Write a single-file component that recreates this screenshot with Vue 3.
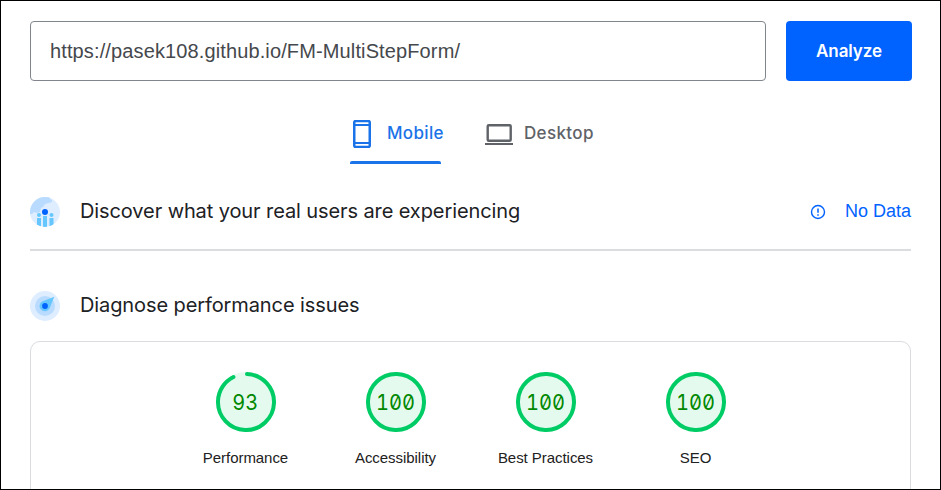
<script setup>
const scores = [
  { label: 'Performance', value: 93 },
  { label: 'Accessibility', value: 100 },
  { label: 'Best Practices', value: 100 },
  { label: 'SEO', value: 100 },
]
const circumference = 2 * Math.PI * 28
const dash = (value) =>
  value === 100 ? 'none' : `${(value / 100) * circumference - 2} ${circumference}`
</script>

<template>
  <main class="page">
    <form class="search" @submit.prevent>
      <input class="url" type="text" value="https://pasek108.github.io/FM-MultiStepForm/" aria-label="URL" />
      <button class="analyze" type="submit"><span>Analyze</span></button>
    </form>

    <nav class="tabs">
      <a class="tab active">
        <svg class="phone" width="18" height="28" viewBox="0 0 18 28">
          <rect x="1.250" y="1" width="15.500" height="26" rx="1.500" fill="none" stroke="currentColor" stroke-width="2.500" />
          <path d="M2 5h14M2 23h14" stroke="currentColor" stroke-width="2" />
        </svg>
        <span class="mobile-label">Mobile</span>
      </a>
      <a class="tab">
        <svg width="28" height="21" viewBox="0 0 28 21">
          <rect x="2.700" y="1.200" width="23" height="15.500" rx="1" fill="none" stroke="currentColor" stroke-width="2.400" />
          <path d="M0 20h28" stroke="currentColor" stroke-width="2" />
        </svg>
        <span class="desktop-label">Desktop</span>
      </a>
    </nav>

    <section class="discover">
      <svg class="badge" width="30" height="30" viewBox="0 0 30 30">
        <defs><clipPath id="disc"><circle cx="15" cy="15" r="15" /></clipPath></defs>
        <g clip-path="url(#disc)">
          <path fill="#deedff" d="M0 0h30v30H0z" />
          <path fill="#b8dbff" d="M0 0h20v2l2 1v2l-3 1-4 1-2 3-2 1-1 4-3 1-3-1-2 2H0z" />
          <g fill="#66c7ff">
            <circle cx="9" cy="18" r="2" /><circle cx="21.500" cy="18" r="2" />
            <path d="M7 21h4v9H7zM13 19h4v11h-4zM19.500 21h4v9h-4z" />
          </g>
          <circle cx="15" cy="15" r="3" fill="#0062ff" />
        </g>
      </svg>
      <h2 class="discover-title">Discover what your real users are experiencing</h2>
      <svg class="info" width="16" height="16" viewBox="0 0 16 16">
        <circle cx="8" cy="8" r="6.500" fill="none" stroke="currentColor" stroke-width="1.400" />
        <path d="M8 4.500v4.300M8 10.300v1.500" stroke="currentColor" stroke-width="1.500" />
      </svg>
      <span class="no-data">No Data</span>
    </section>

    <section class="diagnose">
      <svg class="badge" width="30" height="30" viewBox="0 0 30 30">
        <circle cx="15" cy="15" r="15" fill="#deedff" />
        <circle cx="15" cy="15" r="10" fill="#b8dbff" />
        <path fill="#66c7ff" d="M24.300 5.800 12 10.500a5.300 5.300 0 1 0 7.500 7z" />
        <circle cx="15" cy="15" r="2.900" fill="#0062ff" />
      </svg>
      <h2 class="diagnose-title">Diagnose performance issues</h2>
    </section>

    <section class="card">
      <div v-for="score in scores" :key="score.label" class="score">
        <div class="gauge">
          <svg width="60" height="60" viewBox="0 0 60 60">
            <circle cx="30" cy="30" r="30" fill="#e5faef" />
            <circle
              cx="30" cy="30" r="28" fill="none" stroke="#00cc66" stroke-width="4"
              stroke-linecap="round" :stroke-dasharray="dash(score.value)"
              transform="rotate(-88 30 30)"
            />
          </svg>
          <span class="value">{{ score.value }}</span>
        </div>
        <span class="label">{{ score.label }}</span>
      </div>
    </section>
  </main>
</template>

<style>
body { background: #fff; }
</style>

<style scoped>
.page {
  box-sizing: border-box;
  width: 941px;
  height: 490px;
  overflow: hidden;
  border: 1px solid #000;
  padding: 20px 28px 0 29px;
  background: #fff;
  font-family: "Liberation Sans", Arial, sans-serif;
}
.search { display: flex; gap: 20px; height: 60px; }
.url {
  box-sizing: border-box;
  width: 736px;
  height: 60px;
  padding: 0 19px;
  border: 1px solid #80868b;
  border-radius: 4px;
  outline: none;
  background: #fff;
  color: #45484c;
  font: 20px "Liberation Sans", Arial, sans-serif;
  letter-spacing: 0.125px;
}
.analyze {
  width: 126px;
  height: 60px;
  padding: 0;
  border: 0;
  border-radius: 4px;
  background: #0062ff;
  color: #fff;
  font: 600 17px Inter, sans-serif;
  letter-spacing: -0.1px;
}
.tabs { display: flex; gap: 44px; height: 83px; padding-left: 320px; }
.tab {
  box-sizing: border-box;
  display: flex;
  align-items: center;
  height: 83px;
  padding-top: 23px;
  color: #5f6368;
  font: 500 17px Inter, sans-serif;
  letter-spacing: 0.35px;
  white-space: nowrap;
}
.tab svg { flex: none; }
.tab span { margin-left: 11px; padding-bottom: 2px; }
.active {
  width: 91px;
  color: #1a73e8;
}
.active::after {
  content: "";
  align-self: flex-end;
  flex: none;
  width: 91px;
  height: 3px;
  margin-left: -94px;
  border-radius: 2px 2px 0 0;
  background: #1a73e8;
}
.tab .phone { margin-left: 3px; }
.tab .mobile-label { margin-left: 16px; }
.discover {
  box-sizing: border-box;
  display: flex;
  align-items: center;
  width: 881px;
  height: 87px;
  padding-top: 10px;
  border-bottom: 2px solid #dadce0;
}
.badge { flex: none; margin-right: 20px; }
h2 {
  margin: 0;
  padding-bottom: 2px;
  color: #202124;
  font: 400 20px/28px Inter, sans-serif;
  letter-spacing: -0.1px;
  white-space: nowrap;
}
.info { margin-left: auto; color: #0062ff; flex: none; }
.no-data {
  margin-left: 19px;
  padding-bottom: 2px;
  color: #0062ff;
  font-size: 18px;
  line-height: 28px;
  white-space: nowrap;
}
.diagnose { display: flex; align-items: center; height: 30px; padding: 40px 0 20px; }
.card {
  box-sizing: border-box;
  display: flex;
  justify-content: center;
  width: 881px;
  height: 170px;
  padding-top: 30px;
  border: 1px solid #dadce0;
  border-radius: 10px;
}
.score { display: flex; flex-direction: column; align-items: center; width: 150px; }
.gauge { display: grid; width: 60px; height: 60px; place-items: center; }
.gauge svg, .value { grid-area: 1 / 1; }
.value {
  color: #080;
  font: 400 22px/26px Inter, sans-serif;
  font-feature-settings: "zero", "tnum";
  transform: scaleX(0.91);
}
.label { margin-top: 16px; color: #212121; font-size: 15px; line-height: 20px; letter-spacing: -0.05px; }
</style>
